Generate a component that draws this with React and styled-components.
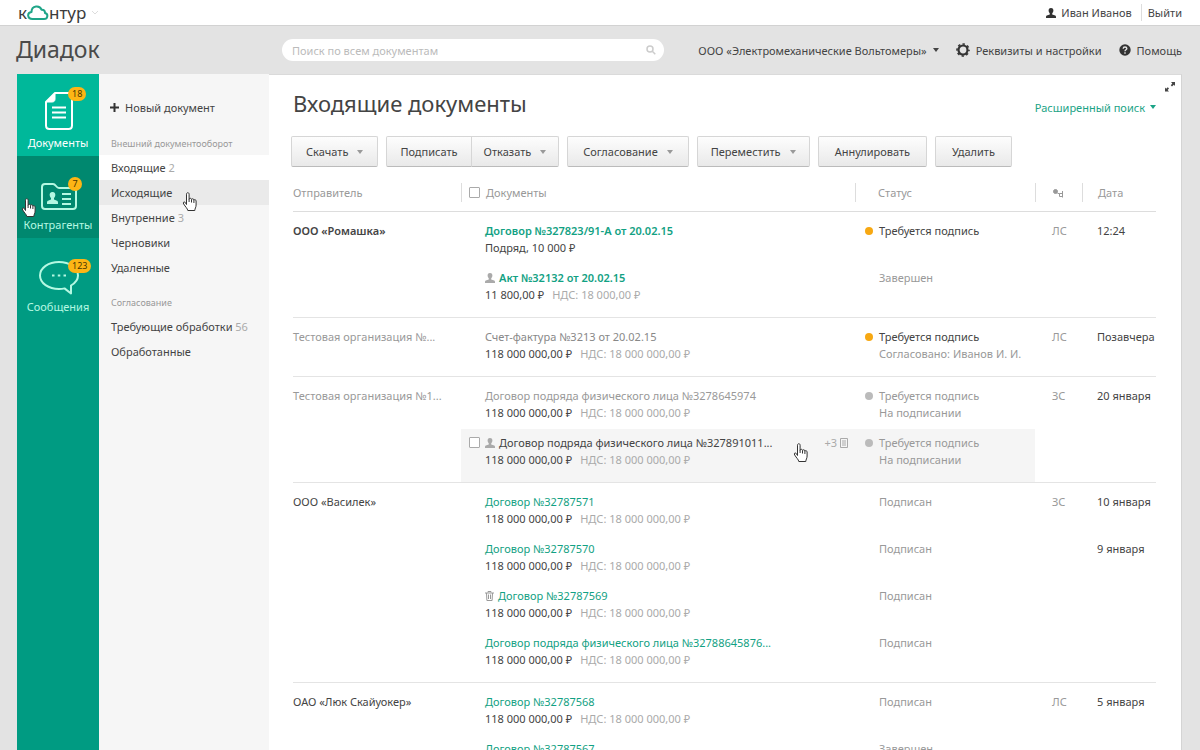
import React from 'react';
import styled, { createGlobalStyle, css } from 'styled-components';

const GlobalStyle = createGlobalStyle`
    * {
        box-sizing: border-box;
    }

    body {
        margin: 0;
        background: #e3e3e3;
        color: #444;
        font-family: "Noto Sans", "Open Sans", sans-serif;
        font-size: 11px;
        line-height: 17px;
    }

    a {
        color: inherit;
        text-decoration: none;
    }

    button {
        font: inherit;
        color: inherit;
        cursor: pointer;
    }
`;

const Page = styled.div`
    display: flex;
    flex-direction: column;
    height: 100vh;
    overflow: hidden;
`;

const TopBar = styled.header`
    display: flex;
    flex: none;
    align-items: center;
    justify-content: space-between;
    height: 26px;
    padding: 0 18px;
    background: #fff;
    border-bottom: 1px solid #d2d2d2;
`;

const Logo = styled.a`
    display: flex;
    align-items: center;
    font-size: 17px;
    line-height: 24px;
    color: #3c3c3c;

    svg:last-child {
        margin-left: 5px;
    }
`;

const UserMenu = styled.div`
    display: flex;
    align-items: center;
`;

const UserLink = styled.a`
    display: flex;
    align-items: center;
    gap: 5px;
    padding-right: 9px;
    margin-right: 6px;
    border-right: 1px solid #ddd;
`;

const Header = styled.div`
    display: flex;
    flex: none;
    align-items: center;
    height: 48px;
    padding: 0 18px 0 16px;
`;

const Product = styled.div`
    flex: none;
    width: 266px;
    padding-bottom: 2px;
    font-size: 23px;
    line-height: 32px;
    color: #4a4a4a;
`;

const SearchBox = styled.label`
    display: flex;
    flex: 1;
    align-items: center;
    height: 22px;
    padding: 0 8px 0 10px;
    margin-right: 34px;
    background: #fff;
    border-radius: 11px;
`;

const SearchInput = styled.input`
    flex: 1;
    min-width: 0;
    padding: 0;
    border: none;
    outline: none;
    background: none;
    font: inherit;
    color: #444;

    &::placeholder {
        color: #bbb;
        opacity: 1;
    }
`;

const HeaderLinks = styled.nav`
    display: flex;
    flex: none;
    align-items: center;
    gap: 17px;
`;

const HeaderButton = styled.button`
    display: flex;
    align-items: center;
    gap: 6px;
    padding: 0;
    border: none;
    background: none;
`;

const Caret = styled.span`
    width: 0;
    height: 0;
    border: 3px solid transparent;
    border-top: 4px solid ${(props) => props.$color || '#999'};
    border-bottom: none;
`;

const Body = styled.div`
    display: flex;
    flex: 1;
    min-height: 0;
    margin: 0 18px 0 17px;
`;

const Sections = styled.nav`
    flex: none;
    width: 82px;
    background: #009b82;
`;

const SectionLink = styled.a`
    position: relative;
    display: flex;
    flex-direction: column;
    align-items: center;
    justify-content: flex-end;
    gap: 3px;
    height: 82px;
    padding-bottom: 5px;
    color: #b4f8e2;

    ${(props) => props.$active && css`
        background: #00b89a;
        color: #fff;
    `}

    ${(props) => props.$hovered && css`
        background: #00886f;
    `}
`;

const SectionIcon = styled.span`
    position: relative;
    display: flex;
    align-items: center;
    justify-content: center;
    width: 44px;
    height: 40px;
    padding: ${(props) => (props.$low ? '6px 0 0 2px' : '0 0 0 2px')};
`;

const Badge = styled.span`
    position: absolute;
    top: ${(props) => (props.$low ? 4 : -4)}px;
    left: 32px;
    min-width: 14px;
    padding: 0 4px;
    border-radius: 7px;
    background: #fdb515;
    color: #4a3500;
    font-size: 9px;
    line-height: 14px;
    text-align: center;
`;

const Hand = styled.svg`
    position: absolute;
    left: ${(props) => props.$left};
    top: ${(props) => props.$top};
    width: 16px;
    height: 20px;
    pointer-events: none;
    z-index: 1;
`;

const Folders = styled.nav`
    flex: none;
    width: 170px;
    background: #f6f6f6;
`;

const NewDocument = styled.button`
    display: flex;
    align-items: center;
    gap: 6px;
    padding: 0 11px;
    margin: 25px 0 19px;
    border: none;
    background: none;
`;

const FolderGroup = styled.h2`
    margin: 0;
    padding: 0 12px 3px;
    font-size: 9px;
    font-weight: 400;
    line-height: 17px;
    color: #999;
`;

const FolderList = styled.ul`
    margin: 0 0 14px;
    padding: 0;
    list-style: none;
`;

const Folder = styled.a`
    position: relative;
    display: block;
    padding: 4px 12px;
    white-space: nowrap;
    background: ${(props) => (props.$current ? '#fff' : props.$hovered ? '#eaeaea' : 'none')};
`;

const Count = styled.span`
    color: #aaa;
`;

const Content = styled.main`
    flex: 1;
    min-width: 0;
    padding: 7px 25px 0 24px;
    background: #fff;
    border-top: 1px solid #dadada;
    border-right: 1px solid #d4d4d4;
    overflow: hidden;
`;

const ExpandRow = styled.div`
    display: flex;
    justify-content: flex-end;
    height: 8px;
    margin-right: -19px;
`;

const ExpandButton = styled.button`
    display: flex;
    padding: 0;
    border: none;
    background: none;
`;

const TitleRow = styled.div`
    display: flex;
    align-items: center;
    justify-content: space-between;
    margin-bottom: 20px;
`;

const Title = styled.h1`
    margin: 0;
    font-size: 22px;
    font-weight: 400;
    line-height: 26px;
`;

const AdvancedSearch = styled.button`
    display: flex;
    align-items: center;
    gap: 5px;
    padding: 8px 0 0;
    border: none;
    background: none;
    color: #1aa386;
`;

const Toolbar = styled.div`
    display: flex;
    gap: 8px;
    margin-left: -2px;
`;

const ButtonGroup = styled.div`
    display: flex;

    button:first-child {
        border-radius: 2px 0 0 2px;
    }

    button:last-child {
        margin-left: -1px;
        border-radius: 0 2px 2px 0;
    }
`;

const ToolButton = styled.button`
    display: flex;
    align-items: center;
    gap: 9px;
    height: 31px;
    padding: 0 ${(props) => props.$pad || 13}px;
    border: 1px solid #d6d6d6;
    border-bottom-color: #bbb;
    border-radius: 2px;
    background: linear-gradient(#fdfdfd, #e9e9e9);
`;

const Table = styled.table`
    width: 100%;
    margin-top: 16px;
    border-spacing: 0;
    table-layout: fixed;
`;

const HeadCell = styled.th`
    width: ${(props) => props.$width};
    padding: 0 0 9px;
    border-bottom: 1px solid #ddd;
    color: #999;
    font-weight: 400;
    text-align: left;
`;

const HeadLabel = styled.div`
    display: flex;
    align-items: center;
    height: 19px;
    padding-left: ${(props) => props.$indent}px;
    border-left: ${(props) => (props.$first ? 'none' : '1px solid #ddd')};
`;

const Checkbox = styled.input`
    appearance: none;
    flex: none;
    width: 11px;
    height: 11px;
    margin: 0;
    border: 1px solid #aaa;
    border-radius: 1px;
    background: #fff;
`;

const Group = styled.tbody`
    & > tr:first-child > td {
        padding-top: 10px;
    }

    & > tr:last-child > td,
    & > tr > td[rowspan] {
        padding-bottom: 14px;
        border-bottom: 1px solid #e4e4e4;
    }
`;

const Cell = styled.td`
    padding: 5px 0 8px;
    vertical-align: top;
    white-space: nowrap;
    color: ${(props) => (props.$muted ? '#999' : '#444')};
    background: ${(props) => (props.$hovered ? '#f5f5f5' : 'none')};
    font-weight: ${(props) => (props.$bold ? 600 : 400)};
`;

const DocLayout = styled.div`
    position: relative;
    display: grid;
    grid-template-columns: 16px 1fr auto;
    align-items: start;
    padding: 0 7px 0 8px;
`;

const CheckSlot = styled.span`
    display: flex;
    align-items: center;
    height: 17px;
`;

const DocTitle = styled.a`
    display: flex;
    align-items: center;
    gap: 4px;
    color: ${(props) => props.$color};
    font-weight: ${(props) => (props.$bold ? 600 : 400)};
`;

const Sum = styled.div`
    display: flex;
    gap: 8px;
    color: #444;
`;

const Tax = styled.span`
    color: #aaa;
`;

const Attachments = styled.span`
    display: flex;
    align-items: center;
    gap: 3px;
    height: 17px;
    color: #aaa;
`;

const StatusLayout = styled.div`
    display: grid;
    grid-template-columns: 8px 1fr;
    column-gap: 6px;
    align-items: center;
    padding-left: 10px;

    & > :not(:first-child) {
        grid-column: 2;
    }
`;

const Dot = styled.span`
    width: 8px;
    height: 8px;
    border-radius: 50%;
    background: ${(props) => props.$color};
`;

const Note = styled.div`
    color: #999;
`;

const Indented = styled.div`
    padding-left: ${(props) => props.$indent}px;
`;

const GREEN = '#12a183';
const GRAY = '#999';
const DARK = '#444';
const SUM = '118 000 000,00 ₽';
const TAX = 'НДС: 18 000 000,00 ₽';

const groups = [
    {
        sender: 'ООО «Ромашка»', bold: true, person: 'ЛС',
        docs: [
            { title: 'Договор №327823/91-А от 20.02.15', color: GREEN, bold: true, sum: 'Подряд, 10 000 ₽', status: 'Требуется подпись', dot: '#f7a812', date: '12:24' },
            { title: 'Акт №32132 от 20.02.15', color: GREEN, bold: true, icon: 'person', sum: '11 800,00 ₽', tax: 'НДС: 18 000,00 ₽', status: 'Завершен' },
        ],
    },
    {
        sender: 'Тестовая организация №...', muted: true, person: 'ЛС',
        docs: [
            { title: 'Счет-фактура №3213 от 20.02.15', color: '#888', sum: SUM, tax: TAX, status: 'Требуется подпись', dot: '#f7a812', note: 'Согласовано: Иванов И. И.', date: 'Позавчера' },
        ],
    },
    {
        sender: 'Тестовая организация №1...', muted: true, person: 'ЗС',
        docs: [
            { title: 'Договор подряда физического лица №3278645974', color: GRAY, sum: SUM, tax: TAX, status: 'Требуется подпись', dot: '#bbb', note: 'На подписании', date: '20 января' },
            { title: 'Договор подряда физического лица №327891011...', color: DARK, icon: 'person', hovered: true, sum: SUM, tax: TAX, status: 'Требуется подпись', dot: '#bbb', note: 'На подписании' },
        ],
    },
    {
        sender: 'ООО «Василек»', person: 'ЗС',
        docs: [
            { title: 'Договор №32787571', color: GREEN, sum: SUM, tax: TAX, status: 'Подписан', date: '10 января' },
            { title: 'Договор №32787570', color: GREEN, sum: SUM, tax: TAX, status: 'Подписан', date: '9 января' },
            { title: 'Договор №32787569', color: GREEN, icon: 'trash', sum: SUM, tax: TAX, status: 'Подписан' },
            { title: 'Договор подряда физического лица №32788645876...', color: GREEN, sum: SUM, tax: TAX, status: 'Подписан' },
        ],
    },
    {
        sender: 'ОАО «Люк Скайуокер»', person: 'ЛС',
        docs: [
            { title: 'Договор №32787568', color: GREEN, sum: SUM, tax: TAX, status: 'Подписан', date: '5 января' },
            { title: 'Договор №32787567', color: GREEN, sum: SUM, tax: TAX, status: 'Завершен' },
        ],
    },
];

const HandCursor = ({ left, top }) => (
    <Hand $left={left} $top={top} viewBox="0 0 16 20" aria-hidden="true">
        <path
            d="M4.5 12.5V2.2c0-2 2.6-2 2.6 0v5c.3-1.3 2.3-1.2 2.4.2.5-1 2.3-.8 2.4.6.7-.7 2.2-.3 2.2 1v4c0 2.5-1.3 3.5-1.3 5.5H5.8C5.5 16.5 3.5 15 1.7 12c-1-1.5.2-2.7 1.5-1.6z"
            fill="#fff"
            stroke="#333"
            strokeLinejoin="round"
        />
        <path d="M7.1 7v3M9.5 7.5v3M11.9 8v3" stroke="#333" fill="none" />
    </Hand>
);

const PersonIcon = ({ size = 10, color = '#aaa' }) => (
    <svg width={size} height={size} viewBox="0 0 10 10" fill={color} aria-hidden="true">
        <path d="M5 0C3.2 0 2.5 1.3 2.6 2.8 2.7 4 3.2 4.8 3.8 5.4v1.2L.8 7.6C.2 7.9 0 8.3 0 9v1h10V9c0-.7-.2-1.1-.8-1.4l-3-1V5.4C6.8 4.8 7.3 4 7.4 2.8 7.5 1.3 6.8 0 5 0z" />
    </svg>
);

const TrashIcon = () => (
    <svg width="9" height="10" viewBox="0 0 9 10" fill="none" stroke="#999" aria-hidden="true">
        <path d="M0 2h9M3 1.5V.5h3v1M1.5 2l.4 7.5h5.2L7.5 2M3.5 3.5V8M5.5 3.5V8" />
    </svg>
);

const GearIcon = () => (
    <svg width="14" height="14" viewBox="0 0 14 14" fill="none" stroke="#333" aria-hidden="true">
        <circle cx="7" cy="7" r="4.5" strokeWidth="2.2" />
        <circle cx="7" cy="7" r="6" strokeWidth="1.6" strokeDasharray="2.4 2.31" strokeDashoffset="1.2" />
    </svg>
);

const HelpIcon = () => (
    <svg width="12" height="12" viewBox="0 0 12 12" aria-hidden="true">
        <circle cx="6" cy="6" r="5.7" fill="#333" />
        <path d="M4.2 4.7c0-2.3 3.6-2.2 3.6-.1C7.8 5.8 6 5.8 6 7.2M6 8.3v1.4" fill="none" stroke="#e3e3e3" strokeWidth="1.4" />
    </svg>
);

const DocumentIcon = () => (
    <svg width="30" height="40" viewBox="0 0 30 40" fill="none" stroke="#fff" strokeWidth="2" aria-hidden="true">
        <path d="M11 2h13.5c2 0 3.5 1.5 3.5 3.5v29c0 2-1.5 3.500-3.500 3.500h-19C3.500 38 2 36.500 2 34.500V11z" strokeLinejoin="round" />
        <path d="M11 2v6c0 2-1 3-3 3H2z" fill="#fff" strokeWidth="1" />
        <path d="M8 16.500h14M8 21.500h14M8 26.500h14" />
    </svg>
);

const FolderIcon = () => (
    <svg width="36" height="27" viewBox="0 0 36 27" fill="none" stroke="#b4f8e2" strokeWidth="2" aria-hidden="true">
        <path d="M1 4c0-2 1-3 3-3h8c3 0 3 4 6 4h14c2 0 3 1 3 3v15c0 2-1 3-3 3H4c-2 0-3-1-3-3z" />
        <path d="M21 11h9M21 16h9M21 21h9" />
        <path d="M11.5 9c-2.2 0-3 1.5-2.8 3.2.1 1.2.6 2 1.3 2.7v1.6l-3 1.3c-.7.3-1 1-1 2V21h11v-1.2c0-1-.3-1.7-1-2l-3-1.3v-1.6c.7-.7 1.2-1.5 1.3-2.7C14.500 10.500 13.700 9 11.500 9z" fill="#b4f8e2" stroke="none" />
    </svg>
);

const MessageIcon = () => (
    <svg width="40" height="34" viewBox="0 0 40 34" fill="none" stroke="#b4f8e2" strokeWidth="2" aria-hidden="true">
        <path d="M20 1C9.5 1 1 6.8 1 14.5S9.500 28 20 28c2 0 4-.2 5.500-.6L32 32.500V24.500c4.300-2.500 7-6 7-10C39 6.800 30.500 1 20 1z" strokeLinejoin="round" />
        <path d="M13 14.500h2.500M18.800 14.500h2.500M24.500 14.500H27" />
    </svg>
);

const DocumentRow = ({ doc, group, first }) => (
    <tr>
        {first && (
            <Cell rowSpan={group.docs.length} $muted={group.muted} $bold={group.bold}>
                {group.sender}
            </Cell>
        )}
        <Cell $hovered={doc.hovered}>
            <DocLayout>
                <CheckSlot>
                    {doc.hovered && <Checkbox type="checkbox" aria-label={doc.title} />}
                </CheckSlot>
                <div>
                    <DocTitle href="#" $color={doc.color} $bold={doc.bold}>
                        {doc.icon === 'person' && <PersonIcon />}
                        {doc.icon === 'trash' && <TrashIcon />}
                        {doc.title}
                    </DocTitle>
                    <Sum>
                        <span>{doc.sum}</span>
                        {doc.tax && <Tax>{doc.tax}</Tax>}
                    </Sum>
                </div>
                {doc.hovered && (
                    <Attachments>
                        +3
                        <svg width="8" height="10" viewBox="0 0 8 10" fill="none" stroke="#aaa" aria-hidden="true">
                            <path d="M.5.5h7v9h-7zM2 3h4M2 5h4M2 7h4" />
                        </svg>
                    </Attachments>
                )}
                {doc.hovered && <HandCursor left="332px" top="9px" />}
            </DocLayout>
        </Cell>
        <Cell $hovered={doc.hovered} $muted={doc.dot !== '#f7a812'}>
            <StatusLayout>
                {doc.dot ? <Dot $color={doc.dot} /> : <span />}
                <div>{doc.status}</div>
                {doc.note && <Note>{doc.note}</Note>}
            </StatusLayout>
        </Cell>
        {first && (
            <Cell rowSpan={group.docs.length} $muted>
                <Indented $indent={17}>{group.person}</Indented>
            </Cell>
        )}
        <Cell>
            <Indented $indent={15}>{doc.date}</Indented>
        </Cell>
    </tr>
);

const App = () => {
    return (
        <Page>
            <GlobalStyle />
            <TopBar>
                <Logo href="#" aria-label="Контур">
                    <span>к</span>
                    <svg width="22" height="16" viewBox="0 0 22 16" fill="none" stroke="#1fa588" strokeWidth="2" aria-hidden="true">
                        <path d="M5.5 14C0 14-.2 7.5 4.5 7 4.5 0 13 0 14.5 4.8 17 4.500 18 6 18 8c3.500.8 3 6-1 6z" strokeLinejoin="round" />
                    </svg>
                    <span>нтур</span>
                    <svg width="8" height="5" viewBox="0 0 8 5" fill="none" stroke="#ddd" aria-hidden="true">
                        <path d="M1 1l3 3 3-3" />
                    </svg>
                </Logo>
                <UserMenu>
                    <UserLink href="#">
                        <PersonIcon color="#333" />
                        Иван Иванов
                    </UserLink>
                    <a href="#">Выйти</a>
                </UserMenu>
            </TopBar>
            <Header>
                <Product>Диадок</Product>
                <SearchBox>
                    <SearchInput type="text" placeholder="Поиск по всем документам" aria-label="Поиск по всем документам" />
                    <svg width="10" height="10" viewBox="0 0 10 10" fill="none" stroke="#ccc" strokeWidth="1.5" aria-hidden="true">
                        <circle cx="4" cy="4" r="3" />
                        <path d="M6.3 6.3L9.3 9.3" />
                    </svg>
                </SearchBox>
                <HeaderLinks>
                    <HeaderButton>
                        ООО «Электромеханические Вольтомеры»
                        <Caret $color="#444" />
                    </HeaderButton>
                    <HeaderButton>
                        <GearIcon />
                        Реквизиты и настройки
                    </HeaderButton>
                    <HeaderButton>
                        <HelpIcon />
                        Помощь
                    </HeaderButton>
                </HeaderLinks>
            </Header>
            <Body>
                <Sections>
                    <SectionLink href="#" $active>
                        <SectionIcon>
                            <DocumentIcon />
                            <Badge>18</Badge>
                        </SectionIcon>
                        Документы
                    </SectionLink>
                    <SectionLink href="#" $hovered>
                        <SectionIcon $low>
                            <FolderIcon />
                            <Badge $low>7</Badge>
                        </SectionIcon>
                        Контрагенты
                        <HandCursor left="4px" top="42px" />
                    </SectionLink>
                    <SectionLink href="#">
                        <SectionIcon $low>
                            <MessageIcon />
                            <Badge $low>123</Badge>
                        </SectionIcon>
                        Сообщения
                    </SectionLink>
                </Sections>
                <Folders>
                    <NewDocument>
                        <svg width="9" height="9" viewBox="0 0 9 9" stroke="#333" strokeWidth="2" aria-hidden="true">
                            <path d="M4.5 0v9M0 4.5h9" />
                        </svg>
                        Новый документ
                    </NewDocument>
                    <FolderGroup>Внешний документооборот</FolderGroup>
                    <FolderList>
                        <li><Folder href="#" $current>Входящие <Count>2</Count></Folder></li>
                        <li>
                            <Folder href="#" $hovered>
                                Исходящие
                                <HandCursor left="83px" top="12px" />
                            </Folder>
                        </li>
                        <li><Folder href="#">Внутренние <Count>3</Count></Folder></li>
                        <li><Folder href="#">Черновики</Folder></li>
                        <li><Folder href="#">Удаленные</Folder></li>
                    </FolderList>
                    <FolderGroup>Согласование</FolderGroup>
                    <FolderList>
                        <li><Folder href="#">Требующие обработки <Count>56</Count></Folder></li>
                        <li><Folder href="#">Обработанные</Folder></li>
                    </FolderList>
                </Folders>
                <Content>
                    <ExpandRow>
                        <ExpandButton aria-label="Развернуть">
                            <svg width="10" height="10" viewBox="0 0 10 10" fill="#444" aria-hidden="true">
                                <path d="M6 0h4v4L8.800 2.800 7 4.500 5.800 3.300 7.300 1.400zM0 9.500v-4l1.200 1.200L2.800 5.200 4 6.400 2.600 8l1.400 1.500z" />
                            </svg>
                        </ExpandButton>
                    </ExpandRow>
                    <TitleRow>
                        <Title>Входящие документы</Title>
                        <AdvancedSearch>
                            Расширенный поиск
                            <Caret $color="#1aa386" />
                        </AdvancedSearch>
                    </TitleRow>
                    <Toolbar>
                        <ToolButton $pad={14}>Скачать <Caret /></ToolButton>
                        <ButtonGroup>
                            <ToolButton>Подписать</ToolButton>
                            <ToolButton $pad={12}>Отказать <Caret /></ToolButton>
                        </ButtonGroup>
                        <ToolButton $pad={15}>Согласование <Caret /></ToolButton>
                        <ToolButton>Переместить <Caret /></ToolButton>
                        <ToolButton $pad={16}>Аннулировать</ToolButton>
                        <ToolButton $pad={16}>Удалить</ToolButton>
                    </Toolbar>
                    <Table>
                        <thead>
                            <tr>
                                <HeadCell $width="168px"><HeadLabel $first>Отправитель</HeadLabel></HeadCell>
                                <HeadCell>
                                    <HeadLabel as="label" $indent={7}>
                                        <CheckSlot><Checkbox type="checkbox" /></CheckSlot>
                                        <Indented $indent={6}>Документы</Indented>
                                    </HeadLabel>
                                </HeadCell>
                                <HeadCell $width="180px"><HeadLabel $indent={22}>Статус</HeadLabel></HeadCell>
                                <HeadCell $width="47px">
                                    <HeadLabel $indent={16}>
                                        <svg width="12" height="10" viewBox="0 0 12 10" fill="none" stroke="#999" role="img" aria-label="Подразделение">
                                            <circle cx="3.500" cy="3.500" r="2" fill="#999" />
                                            <path d="M5.500 5.500h2M10.500 3v6.500M10.500 5.500h-3v3h3" />
                                        </svg>
                                    </HeadLabel>
                                </HeadCell>
                                <HeadCell $width="74px"><HeadLabel $indent={15}>Дата</HeadLabel></HeadCell>
                            </tr>
                        </thead>
                        {groups.map((group) => (
                            <Group key={group.sender}>
                                {group.docs.map((doc, index) => (
                                    <DocumentRow key={doc.title} doc={doc} group={group} first={index === 0} />
                                ))}
                            </Group>
                        ))}
                    </Table>
                </Content>
            </Body>
        </Page>
    );
};

export default App;
